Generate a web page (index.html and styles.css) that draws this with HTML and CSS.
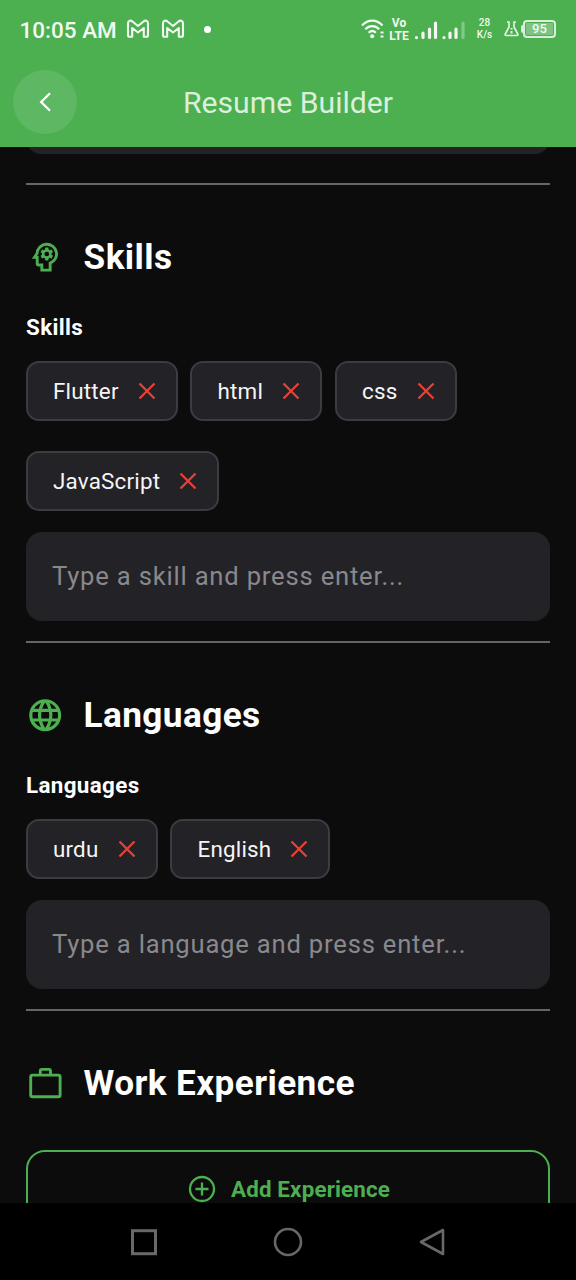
FILE: index.html
```
<!DOCTYPE html>
<html lang="en">
<head>
<meta charset="utf-8">
<title>Resume Builder</title>
<link rel="stylesheet" href="styles.css">
</head>
<body>
<svg class="defs" width="0" height="0">
  <symbol id="cross" viewBox="0 0 18 18"><path d="M1.5 1.5l15 15M16.5 1.5l-15 15" fill="none" stroke="#e84136" stroke-width="2.3"/></symbol>
  <symbol id="mail" viewBox="0 0 24 20"><path d="M3.500 17.800Q2 17.800 2 16.300V4.500C2 1.500 4.800 1 6.500 2.500L12 7l5.500-4.500C19.200 1 22 1.500 22 4.500V16.300Q22 17.800 20.500 17.800H17.800V9L12 13.500 6.200 9V17.800z" fill="none" stroke="#f0faf0" stroke-width="2.100" stroke-linejoin="round"/></symbol>
</svg>
<div class="phone">
  <header class="top">
    <div class="status">
      <div class="status-left">
        <span class="time">10:05 AM</span>
        <svg class="mail" width="24" height="20"><use href="#mail"/></svg>
        <svg class="mail" width="24" height="20"><use href="#mail"/></svg>
        <span class="dot"></span>
      </div>
      <div class="status-right">
        <svg class="wifi" width="24" height="22" viewBox="0 0 24 22" fill="none" stroke="#f0faf0" stroke-width="2.2"><path d="M1 7.500C7 1 15.500 1 21.500 7.500M4.300 11.200c4-4.200 9.900-4.200 13.900 0M7.600 14.800c2.200-2.200 5.100-2.200 7.300 0"/><circle cx="11.200" cy="18.200" r="2" fill="#f0faf0" stroke="none"/><path d="M19.500 14.500h3M19.500 18.500h3" stroke-width="2"/></svg>
        <div class="volte"><span>Vo</span><span>LTE</span></div>
        <svg class="signal" width="52" height="20" viewBox="0 0 52 20" stroke="#f0faf0" stroke-width="3.200" stroke-linecap="round"><path d="M2.500 17.500v.1M9 13v4.500M15.500 9v8.500M21.500 3v14.500M30 17.500v.1M36 13v4.500M42 9v8.500"/><path d="M49 3v14.500" opacity=".35"/></svg>
        <div class="rate"><span>28</span><span>K/s</span></div>
        <svg class="flask" width="15" height="16" viewBox="0 0 15 16" fill="none" stroke="#e5f4e5" stroke-width="1.600"><path d="M3 1h2v5L1 13.500q0 1 1 1h11q1 0 1-1L10 6V1h2"/><path d="M7.500 7v1.500M7.500 10v2.500" stroke-width="2"/></svg>
        <div class="battery"><span class="cap"></span><span class="cell">95</span></div>
      </div>
    </div>
    <div class="bar">
      <div class="back"><svg width="14" height="22" viewBox="0 0 14 22"><path d="M12 2.200L3.200 11l8.800 8.800" fill="none" stroke="#fff" stroke-width="2.300"/></svg></div>
      <h1 class="title"><span>Resume Builder</span></h1>
    </div>
  </header>
  <main class="content">
    <div class="field-tail"></div>
    <section class="section">
      <h2 class="heading">
        <svg class="icon" viewBox="0 0 24 24"><path d="M9.900 20.100v-3.200H8a1 1 0 0 1-1-1v-3.800H5.300L6.900 9.700A6.100 6.100 0 1 1 15.100 15.700V20.100z" fill="none" stroke="#4caf50" stroke-width="1.800"/><path fill="#4caf50" fill-rule="evenodd" d="M13 8.570a1.430 1.430 0 1 0 0 2.860 1.430 1.430 0 0 0 0-2.860zM16 10c0 .13-.01.26-.02.39l.83.66c.08.06.1.16.05.25l-.8 1.390c-.05.09-.16.12-.24.09l-.99-.4c-.21.16-.43.29-.67.390L14 13.830c-.01.1-.1.17-.2.17h-1.600c-.1 0-.18-.07-.2-.17l-.15-1.060c-.25-.1-.47-.23-.68-.39l-.99.4c-.09.03-.2 0-.25-.09l-.8-1.390c-.05-.08-.03-.19.05-.25l.84-.66c-.01-.13-.02-.26-.02-.39s.02-.27.04-.39l-.85-.66c-.08-.06-.1-.16-.05-.26l.8-1.380c.05-.09.15-.12.24-.09l1 .4c.2-.15.43-.29.67-.390L12 6.170c.02-.1.1-.17.2-.17h1.600c.1 0 .18.07.2.17l.15 1.060c.24.1.46.23.67.390l1-.4c.09-.03.2 0 .24.09l.8 1.380c.05.09.03.2-.05.26l-.85.66c.03.12.04.25.04.39z"/></svg>
        <span>Skills</span>
      </h2>
      <div class="label">Skills</div>
      <div class="chips">
        <div class="chip" style="width:152px"><span>Flutter</span><svg class="x"><use href="#cross"/></svg></div>
        <div class="chip" style="width:132px"><span>html</span><svg class="x"><use href="#cross"/></svg></div>
        <div class="chip" style="width:122px"><span>css</span><svg class="x"><use href="#cross"/></svg></div>
        <div class="chip" style="width:193px"><span>JavaScript</span><svg class="x"><use href="#cross"/></svg></div>
      </div>
      <div class="field">Type a skill and press enter...</div>
    </section>
    <section class="section">
      <h2 class="heading">
        <svg class="icon" viewBox="0 0 24 24"><path fill="#4caf50" d="M11.990 2C6.470 2 2 6.480 2 12s4.470 10 9.990 10C17.520 22 22 17.520 22 12S17.520 2 11.990 2zm6.930 6h-2.950c-.32-1.250-.78-2.450-1.380-3.560 1.840.63 3.370 1.910 4.330 3.560zM12 4.040c.83 1.200 1.480 2.530 1.910 3.960h-3.820c.43-1.430 1.080-2.760 1.910-3.960zM4.260 14C4.100 13.360 4 12.690 4 12s.1-1.360.26-2h3.380c-.08.66-.14 1.320-.14 2s.06 1.340.14 2H4.260zm.82 2h2.950c.32 1.250.78 2.450 1.380 3.560-1.840-.63-3.370-1.900-4.330-3.560zm2.950-8H5.080c.96-1.660 2.490-2.930 4.330-3.560C8.810 5.550 8.350 6.750 8.030 8zM12 19.960c-.83-1.200-1.480-2.530-1.910-3.960h3.820c-.43 1.430-1.080 2.760-1.910 3.960zM14.340 14H9.660c-.09-.66-.16-1.320-.16-2s.07-1.350.16-2h4.680c.09.65.16 1.320.16 2s-.07 1.340-.16 2zm.25 5.560c.6-1.110 1.060-2.310 1.380-3.560h2.950c-.96 1.650-2.490 2.930-4.330 3.560zM16.360 14c.08-.66.14-1.320.14-2s-.06-1.340-.14-2h3.380c.16.64.26 1.310.26 2s-.1 1.360-.26 2h-3.380z"/></svg>
        <span>Languages</span>
      </h2>
      <div class="label">Languages</div>
      <div class="chips">
        <div class="chip" style="width:132px"><span>urdu</span><svg class="x"><use href="#cross"/></svg></div>
        <div class="chip" style="width:160px"><span>English</span><svg class="x"><use href="#cross"/></svg></div>
      </div>
      <div class="field">Type a language and press enter...</div>
    </section>
    <section class="section">
      <h2 class="heading">
        <svg class="icon" viewBox="0 0 38.400 38.400" fill="none" stroke="#4caf50" stroke-width="2.900"><rect x="4.700" y="11.100" width="29.400" height="21.600" rx="1.800"/><path d="M14.300 10.500V6.900q0-1.500 1.500-1.500h7.200q1.500 0 1.500 1.500v3.600"/></svg>
        <span>Work Experience</span>
      </h2>
      <div class="add">
        <svg width="28" height="28" viewBox="0 0 28 28" fill="none" stroke="#4caf50" stroke-width="2.300"><circle cx="14" cy="14" r="12"/><path d="M14 7.500v13M7.500 14h13"/></svg>
        <span>Add Experience</span>
      </div>
    </section>
  </main>
  <nav class="nav">
    <svg width="28" height="30" viewBox="0 0 28 30"><rect x="2.500" y="3.700" width="23" height="23" fill="none" stroke="#686868" stroke-width="3"/></svg>
    <svg width="30" height="30" viewBox="0 0 30 30"><circle cx="15" cy="15" r="13" fill="none" stroke="#686868" stroke-width="2.600"/></svg>
    <svg width="28" height="30" viewBox="0 0 28 30"><path d="M25 3v24L3 15z" fill="none" stroke="#686868" stroke-width="2.600" stroke-linejoin="round"/></svg>
  </nav>
</div>
</body>
</html>
```
FILE: styles.css
```
* { box-sizing: border-box; }
body { margin: 0; background: #0c0c0c; font-family: Roboto, sans-serif; color: #fff; }
svg { display: block; flex: none; }
.defs { position: absolute; }
h1, h2 { margin: 0; }
.phone { width: 576px; height: 1280px; display: flex; flex-direction: column; overflow: hidden; }
.top { height: 147px; flex: none; background: #4caf50; }
.status { height: 58px; display: flex; justify-content: space-between; padding: 0 20px; color: #f0faf0; }
.status-left, .status-right { display: flex; align-items: center; }
.time { width: 97px; font-size: 22.500px; font-weight: 500; white-space: nowrap; padding-top: 1px; margin-left: -.5px; }
.mail { margin: 0 0 1px 9.500px; }
.mail + .mail { margin-left: 11px; }
.dot { width: 7px; height: 7px; border-radius: 50%; background: #fff; margin-left: 19px; }
.wifi { margin-right: 3px; }
.volte { width: 22px; display: flex; flex-direction: column; align-items: center; font-size: 12px; line-height: 12px; font-weight: 700; margin-right: 4px; }
.volte span + span { margin-top: 1px; }
.signal { margin: 1px 10px 0 0; }
.rate { width: 17px; display: flex; flex-direction: column; align-items: center; font-size: 10px; line-height: 12px; font-weight: 500; margin-right: 11px; }
.flask { margin-right: 2px; }
.battery { display: flex; align-items: center; }
.cap { width: 2px; height: 8px; border-radius: 2px 0 0 2px; background: #d9efd9; }
.cell { width: 33px; height: 18px; border: 2px solid #d9efd9; border-radius: 4px; background: #7cc480; background-clip: content-box; padding: 1px; font-size: 13px; line-height: 12px; font-weight: 500; text-align: center; }
.bar { height: 88px; padding-left: 13px; display: grid; grid-template-columns: 64px 1fr 77px; align-items: center; }
.back { width: 64px; height: 64px; border-radius: 50%; background: #5eb762; display: flex; align-items: center; justify-content: center; }
.title { font-size: 30.200px; font-weight: 400; line-height: 34px; padding-top: 2px; text-align: center; color: #dbefdc; }
.content { height: 1056px; flex: none; padding: 0 26px; overflow: hidden; }
.field-tail { height: 7px; margin-bottom: 29px; background: #232227; clip-path: inset(-24px 0 0 0 round 16px); }
.section { border-top: 2px solid #666; }
.section + .section { margin-top: 20px; }
.heading { height: 42px; margin-top: 51px; display: flex; align-items: center; gap: 19.200px; font-size: 35.200px; font-weight: 700; letter-spacing: .4px; }
.heading span { white-space: nowrap; }
.icon { width: 38.400px; height: 38.400px; }
.label { margin-top: 36px; height: 26px; line-height: 26px; font-size: 22.400px; font-weight: 700; letter-spacing: .35px; }
.chips { margin-top: 21px; display: flex; flex-wrap: wrap; gap: 30px 12.500px; margin-left: -.5px; }
.chip { height: 60px; border: 2px solid #3c3b42; border-radius: 13px; background: #232227; padding: 0 20px 0 25.500px; display: flex; align-items: center; justify-content: space-between; font-size: 22.400px; letter-spacing: .2px; white-space: nowrap; color: #f5f5f5; }
.x { width: 18px; height: 18px; }
.field { margin-top: 21px; height: 89px; border-radius: 16px; background: #232227; padding: 0 26px 1px; display: flex; align-items: center; font-size: 25.600px; letter-spacing: .8px; color: #89898d; white-space: nowrap; }
.add { margin-top: 46px; height: 77px; border: 2.400px solid #4caf50; border-radius: 19px; display: flex; align-items: center; justify-content: center; gap: 15px; padding-left: 2px; color: #4caf50; font-size: 22.400px; font-weight: 700; letter-spacing: .15px; }
.nav { flex: 1; background: #000; display: flex; justify-content: center; align-items: center; gap: 115px; }
```
